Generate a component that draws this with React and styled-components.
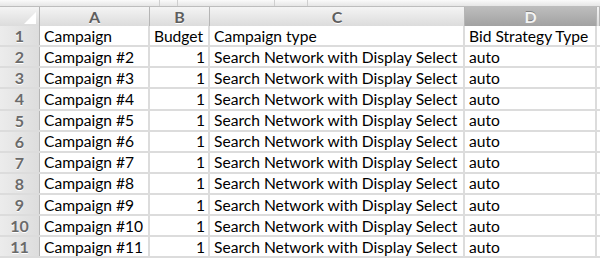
import React from "react";
import styled, { createGlobalStyle } from "styled-components";

const GlobalStyle = createGlobalStyle`
	html, body {
		margin: 0;
		padding: 0;
		background: #ffffff;
	}
	body {
		width: 600px;
		height: 261px;
		overflow: hidden;
		font-family: "Lato", "Open Sans", sans-serif;
	}
`;

const COLS = "40px 110px 60px 255px 132px 3px";

const Sheet = styled.div`
	width: 600px;
	height: 261px;
	display: flex;
	flex-direction: column;
	background: #ffffff;
`;

const TopStrip = styled.div`
	height: 6px;
	display: grid;
	grid-template-columns: 160px 18px 97px 33px 1fr;
	background: linear-gradient(#fafafa, #e6e6e6);
	border-bottom: 1px solid #bdbdbd;
`;

const StripCell = styled.div`
	border-right: 1px solid #cfcfcf;
`;

const HeaderRow = styled.div`
	height: 18px;
	display: grid;
	grid-template-columns: ${COLS};
	border-bottom: 1px solid #a9a9a9;
`;

const ColHead = styled.div`
	display: flex;
	align-items: center;
	justify-content: center;
	box-sizing: border-box;
	border-right: 1px solid #b5b5b5;
	background: ${(p) =>
		p.$selected
			? "linear-gradient(#bdbdbd, #a2a2a2)"
			: "linear-gradient(#f4f4f4, #dcdcdc)"};
	color: ${(p) => (p.$selected ? "#f4f4f4" : "#5e5e5e")};
	text-shadow: ${(p) =>
		p.$selected ? "0 -1px 0 rgba(0,0,0,0.3)" : "0 1px 0 #ffffff"};
	font-family: "Lato", sans-serif;
	font-weight: 700;
	font-size: 16px;
	position: relative;
`;

const Corner = styled.div`
	position: absolute;
	right: 3px;
	bottom: 2px;
	width: 0;
	height: 0;
	border-left: 12px solid transparent;
	border-bottom: 12px solid #ffffff;
`;

const Row = styled.div`
	height: 21.13px;
	display: grid;
	grid-template-columns: ${COLS};
	box-sizing: border-box;
	border-bottom: 2px solid #dcdcdc;
`;

const RowHead = styled.div`
	display: flex;
	align-items: center;
	justify-content: center;
	background: linear-gradient(90deg, #ececec, #dddddd);
	border-right: 1px solid #b5b5b5;
	color: #6a6a6a;
	text-shadow: 0 1px 0 #ffffff;
	font-family: "Lato", sans-serif;
	font-weight: 700;
	font-size: 16px;
`;

const Cell = styled.div`
	display: flex;
	align-items: center;
	justify-content: ${(p) => (p.$num ? "flex-end" : "flex-start")};
	box-sizing: border-box;
	padding: 0 3px 0 4px;
	border-right: 2px solid #dcdcdc;
	color: #000000;
	font-size: 15.6px;
	white-space: nowrap;
	overflow: hidden;
`;

const rows = [
	["Campaign", "Budget", "Campaign type", "Bid Strategy Type"],
	...Array.from({ length: 10 }, (_, i) => [
		`Campaign #${i + 2}`,
		"1",
		"Search Network with Display Select",
		"auto",
	]),
];

export default function App() {
	return (
		<Sheet>
			<GlobalStyle />
			<TopStrip>
				<StripCell />
				<StripCell />
				<StripCell />
				<StripCell />
				<div />
			</TopStrip>
			<HeaderRow>
				<ColHead>
					<Corner />
				</ColHead>
				<ColHead>A</ColHead>
				<ColHead>B</ColHead>
				<ColHead>C</ColHead>
				<ColHead $selected>D</ColHead>
				<ColHead />
			</HeaderRow>
			{rows.map((r, i) => (
				<Row key={i}>
					<RowHead>{i + 1}</RowHead>
					<Cell>{r[0]}</Cell>
					<Cell $num={i > 0}>{r[1]}</Cell>
					<Cell>{r[2]}</Cell>
					<Cell>{r[3]}</Cell>
					<Cell />
				</Row>
			))}
		</Sheet>
	);
}
